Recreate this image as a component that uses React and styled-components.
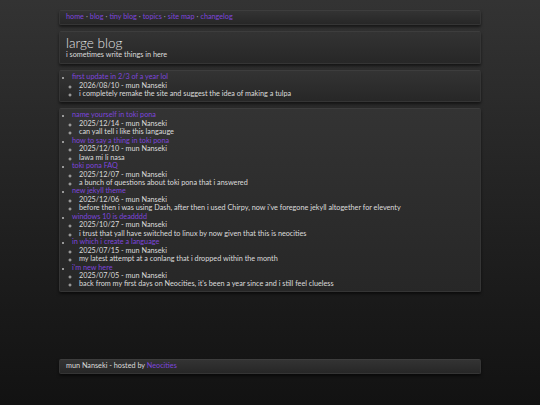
import React from "react";
import styled, { createGlobalStyle } from "styled-components";

const Global = createGlobalStyle`
  html, body { margin: 0; padding: 0; }
  body {
    background: linear-gradient(to bottom, #333333 0px, #1a1a1a 300px, #121212 405px);
    min-height: 405px;
    font-family: "Lato", "Noto Sans", sans-serif;
    font-size: 7.25px;
    line-height: 8.45px;
    color: #dcdcdc;
  }
  a { color: #7d45dc; text-decoration: none; }
`;

const Page = styled.div`
  width: 422px;
  margin: 0 auto;
  padding-top: 10px;
  display: flex;
  flex-direction: column;
  gap: 6px;
`;

const Panel = styled.div`
  background: linear-gradient(to bottom, #333333, #272727);
  border: 1px solid #353535;
  border-top-color: #3d3d3d;
  border-radius: 2px;
  box-shadow: 0 2px 3px rgba(0, 0, 0, 0.55);
  padding: ${(p) => p.$pad || "2.3px 6px"};
`;

const Nav = styled.nav`
  display: flex;
  gap: 2px;
  align-items: center;
`;

const Sep = styled.span`
  color: #a0a0a0;
`;

const Title = styled.h1`
  margin: 0;
  font-weight: 300;
  font-size: 13.5px;
  line-height: 16px;
  color: #e4e4e4;
`;

const Sub = styled.p`
  margin: 0;
`;

const List = styled.ul`
  margin: 0;
  padding-left: 6px;
  list-style: disc;
  ul {
    padding-left: 7px;
    list-style: circle;
  }
  li::marker { color: #bdbdbd; font-size: 5.5px; }
`;

const Footer = styled(Panel)`
  margin-top: 61px;
`;

const posts = [
  ["name yourself in toki pona", "2025/12/14", "can yall tell i like this langauge"],
  ["how to say a thing in toki pona", "2025/12/10", "lawa mi li nasa"],
  ["toki pona FAQ", "2025/12/07", "a bunch of questions about toki pona that i answered"],
  ["new jekyll theme", "2025/12/06", "before then i was using Dash, after then i used Chirpy, now i've foregone jekyll altogether for eleventy"],
  ["windows 10 is deadddd", "2025/10/27", "i trust that yall have switched to linux by now given that this is neocities"],
  ["in which i create a language", "2025/07/15", "my latest attempt at a conlang that i dropped within the month"],
  ["i'm new here", "2025/07/05", "back from my first days on Neocities, it's been a year since and i still feel clueless"],
];

const Post = ({ title, date, desc }) => (
  <li>
    <a href="#">{title}</a>
    <ul>
      <li>{date} - mun Nanseki</li>
      <li>{desc}</li>
    </ul>
  </li>
);

const navItems = ["home", "blog", "tiny blog", "topics", "site map", "changelog"];

export default function App() {
  return (
    <>
      <Global />
      <Page>
        <Panel>
          <Nav>
            {navItems.map((n, i) => (
              <React.Fragment key={n}>
                {i > 0 && <Sep>·</Sep>}
                <a href="#">{n}</a>
              </React.Fragment>
            ))}
          </Nav>
        </Panel>
        <Panel $pad="3.3px 6px">
          <Title>large blog</Title>
          <Sub>i sometimes write things in here</Sub>
        </Panel>
        <Panel>
          <List>
            <Post title="first update in 2/3 of a year lol" date="2026/08/10" desc="i completely remake the site and suggest the idea of making a tulpa" />
          </List>
        </Panel>
        <Panel>
          <List>
            {posts.map(([t, d, s]) => (
              <Post key={t} title={t} date={d} desc={s} />
            ))}
          </List>
        </Panel>
        <Footer>
          mun Nanseki - hosted by <a href="#">Neocities</a>
        </Footer>
      </Page>
    </>
  );
}
